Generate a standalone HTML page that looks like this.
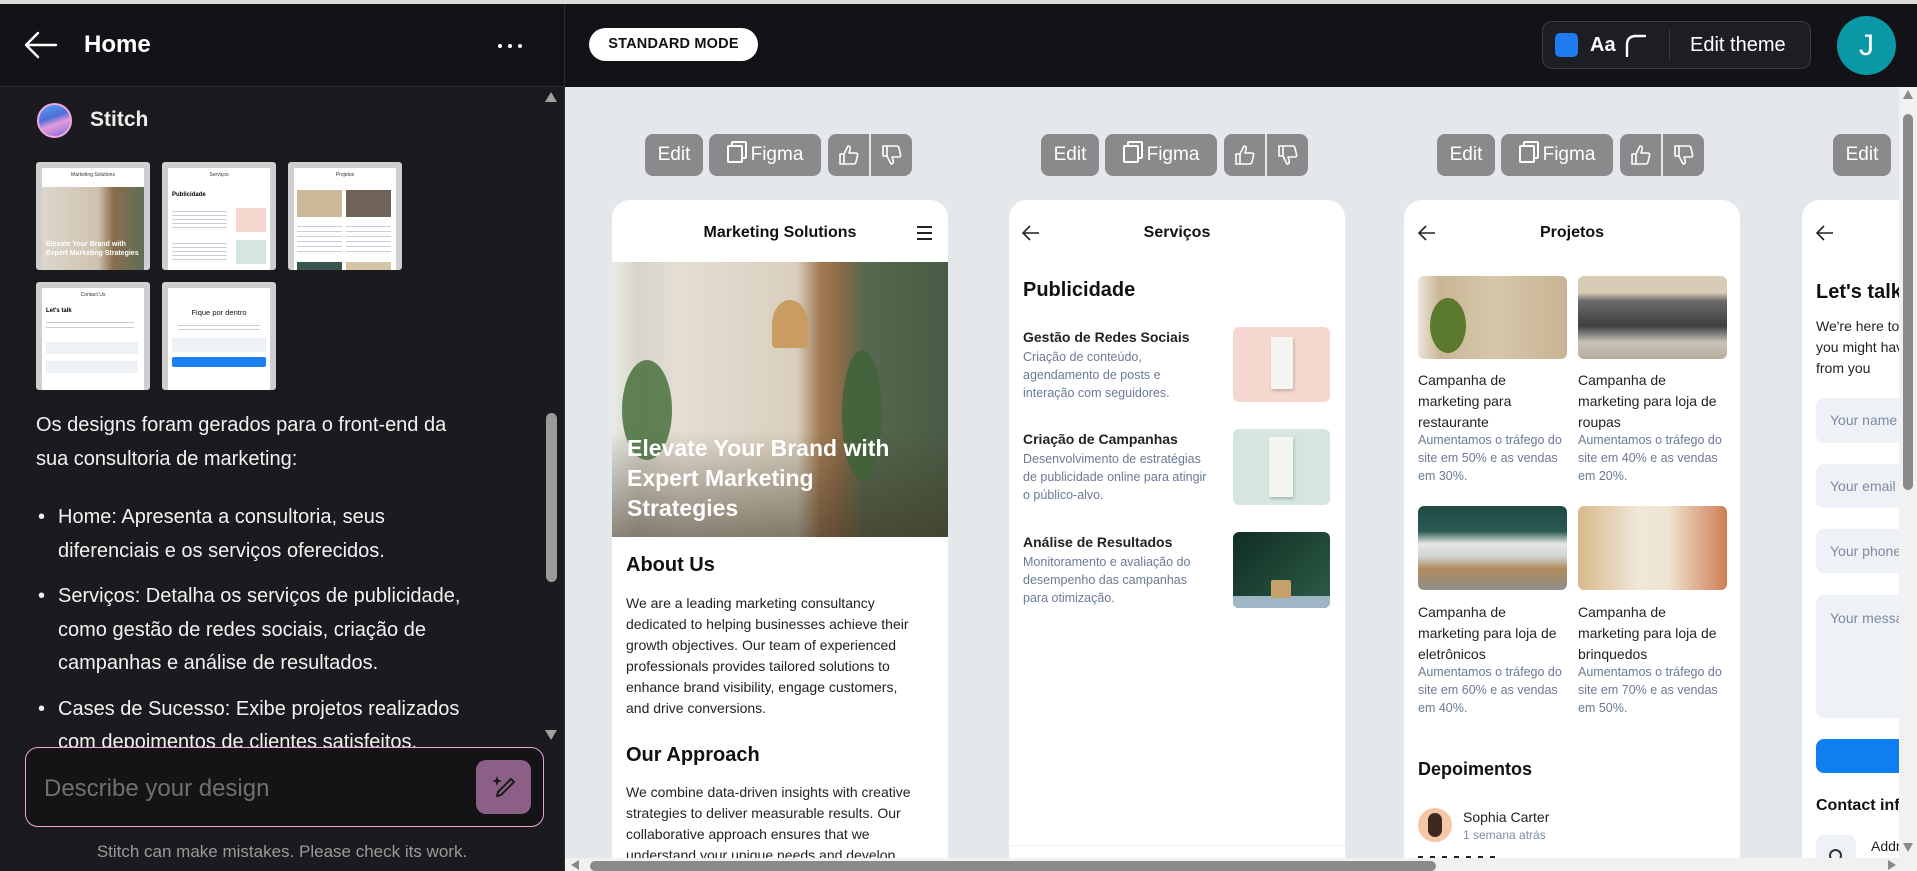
<!DOCTYPE html>
<html><head><meta charset="utf-8"><style>
*{margin:0;padding:0;box-sizing:border-box}
body{width:1917px;height:871px;overflow:hidden;background:#e5e8eb;font-family:"Liberation Sans",sans-serif;position:relative}
.a{position:absolute}
.t{position:absolute;white-space:nowrap}
.btn{position:absolute;top:134px;height:42px;background:#8a8a8c;border-radius:8px;color:#fff;font-size:19px;line-height:42px;text-align:center}
.btn svg{position:absolute;left:10px;top:10px}
.card{position:absolute;top:200px;width:336px;height:700px;background:#fff;border-radius:18px;overflow:hidden}
.ct{font-weight:bold;font-size:16px;color:#111}
.gr{color:#6a7a95;font-size:12.5px;line-height:18px}
.bk{font-size:14px;color:#222;line-height:21px}
.inp{position:absolute;left:14px;width:200px;background:#eef1f5;border-radius:8px;color:#7d8ca3;font-size:14px;padding-left:14px}
</style></head><body>
<div class="a" style="left:0;top:0;width:1917px;height:4px;background:#dcdcdc"></div>
<!-- SIDEBAR -->
<div class="a" style="left:0;top:4px;width:564px;height:867px;background:#1b1b1f"></div>
<div class="a" style="left:0;top:4px;width:564px;height:83px;background:#131217;border-bottom:1px solid #2c2c30"></div>
<svg class="a" style="left:24px;top:31px" width="34" height="28" viewBox="0 0 34 28"><path d="M14 2 L2 14 L14 26 M2 14 H32" stroke="#fff" stroke-width="2.4" fill="none" stroke-linecap="round" stroke-linejoin="round"/></svg>
<div class="t" style="left:84px;top:30px;font-size:24px;font-weight:bold;color:#fff;line-height:30px">Home</div>
<div class="a" style="left:498px;top:44px;width:4px;height:4px;border-radius:2px;background:#fff"></div>
<div class="a" style="left:508px;top:44px;width:4px;height:4px;border-radius:2px;background:#fff"></div>
<div class="a" style="left:518px;top:44px;width:4px;height:4px;border-radius:2px;background:#fff"></div>
<div class="a" style="left:37px;top:103px;width:35px;height:35px;border-radius:50%;background:linear-gradient(160deg,#5aa7f0 0%,#4c6fd8 40%,#e59bd8 60%,#7b6be0 100%);border:2px solid #f1a7e6"></div>
<div class="t" style="left:90px;top:107px;font-size:21px;font-weight:bold;color:#eee;line-height:26px">Stitch</div>
<!-- thumbnails -->
<div class="a" style="left:36px;top:162px;width:114px;height:108px;background:#cfcfcf;border-radius:3px;padding:6px 6px 0 6px"><div style="background:#fff;height:102px;position:relative;overflow:hidden"><div style="font-size:5px;text-align:center;padding-top:4px;color:#333">Marketing Solutions</div><div style="position:absolute;top:19px;left:0;right:0;bottom:0;background:linear-gradient(90deg,#dcd6cc,#cfc2ae 55%,#8a6e4e 70%,#5d6e57)"></div><div style="position:absolute;left:4px;top:72px;color:#fff;font-size:7px;font-weight:bold;line-height:9px">Elevate Your Brand with Expert Marketing Strategies</div></div></div>
<div class="a" style="left:162px;top:162px;width:114px;height:108px;background:#cfcfcf;border-radius:3px;padding:6px 6px 0 6px"><div style="background:#fff;height:102px;position:relative;overflow:hidden"><div style="font-size:5px;text-align:center;padding-top:4px;color:#333">Serviços</div><div style="position:absolute;left:4px;top:24px;font-size:6px;font-weight:bold">Publicidade</div><div style="position:absolute;right:4px;top:40px;width:30px;height:24px;background:#f6d7cf"></div><div style="position:absolute;right:4px;top:72px;width:30px;height:24px;background:#d5e5df"></div><div style="position:absolute;left:4px;top:40px;width:55px;height:20px;background:repeating-linear-gradient(#fff 0 3px,#c9cfd9 3px 4px)"></div><div style="position:absolute;left:4px;top:72px;width:55px;height:20px;background:repeating-linear-gradient(#fff 0 3px,#c9cfd9 3px 4px)"></div></div></div>
<div class="a" style="left:288px;top:162px;width:114px;height:108px;background:#cfcfcf;border-radius:3px;padding:6px 6px 0 6px"><div style="background:#fff;height:102px;position:relative;overflow:hidden"><div style="font-size:5px;text-align:center;padding-top:4px;color:#333">Projetos</div><div style="position:absolute;left:3px;top:22px;width:45px;height:27px;background:#cbb99a"></div><div style="position:absolute;left:52px;top:22px;width:45px;height:27px;background:#6f6256"></div><div style="position:absolute;left:3px;top:54px;width:45px;height:30px;background:repeating-linear-gradient(#fff 0 4px,#c9cfd9 4px 5px)"></div><div style="position:absolute;left:52px;top:54px;width:45px;height:30px;background:repeating-linear-gradient(#fff 0 4px,#c9cfd9 4px 5px)"></div><div style="position:absolute;left:3px;top:94px;width:45px;height:10px;background:#3b5651"></div><div style="position:absolute;left:52px;top:94px;width:45px;height:10px;background:#d6c4a6"></div></div></div>
<div class="a" style="left:36px;top:282px;width:114px;height:108px;background:#cfcfcf;border-radius:3px;padding:6px 6px 0 6px"><div style="background:#fff;height:102px;position:relative;overflow:hidden"><div style="font-size:5px;text-align:center;padding-top:4px;color:#333">Contact Us</div><div style="position:absolute;left:4px;top:20px;font-size:6px;font-weight:bold">Let's talk</div><div style="position:absolute;left:4px;top:30px;width:88px;height:14px;background:repeating-linear-gradient(#fff 0 4px,#ccc 4px 5px)"></div><div style="position:absolute;left:4px;top:54px;width:92px;height:12px;background:#eef1f5"></div><div style="position:absolute;left:4px;top:73px;width:92px;height:12px;background:#eef1f5"></div></div></div>
<div class="a" style="left:162px;top:282px;width:114px;height:108px;background:#cfcfcf;border-radius:3px;padding:6px 6px 0 6px"><div style="background:#fff;height:102px;position:relative;overflow:hidden"><div style="position:absolute;left:0;right:0;top:20px;font-size:7.5px;text-align:center;color:#111">Fique por dentro</div><div style="position:absolute;left:10px;top:34px;width:82px;height:8px;background:repeating-linear-gradient(#fff 0 3px,#ccc 3px 4px)"></div><div style="position:absolute;left:4px;top:50px;width:94px;height:14px;background:#eef1f5"></div><div style="position:absolute;left:4px;top:69px;width:94px;height:10px;background:#1a7ff0;border-radius:2px"></div></div></div>
<!-- sidebar text -->
<div class="a" style="left:36px;top:409px;width:470px;height:338px;overflow:hidden;color:#f2f2f2;font-size:20px;line-height:33.5px">
<div>Os designs foram gerados para o front-end da<br>sua consultoria de marketing:</div>
<div style="position:relative;margin-top:25px;padding-left:22px"><span style="position:absolute;left:2px">•</span>Home: Apresenta a consultoria, seus<br>diferenciais e os serviços oferecidos.</div>
<div style="position:relative;margin-top:12px;padding-left:22px"><span style="position:absolute;left:2px">•</span>Serviços: Detalha os serviços de publicidade,<br>como gestão de redes sociais, criação de<br>campanhas e análise de resultados.</div>
<div style="position:relative;margin-top:12px;padding-left:22px"><span style="position:absolute;left:2px">•</span>Cases de Sucesso: Exibe projetos realizados<br>com depoimentos de clientes satisfeitos.</div>
</div>
<div class="a" style="left:545px;top:92px;width:0;height:0;border-left:6px solid transparent;border-right:6px solid transparent;border-bottom:10px solid #a0a0a0"></div>
<div class="a" style="left:546px;top:413px;width:11px;height:169px;border-radius:6px;background:#9a9a9a"></div>
<div class="a" style="left:545px;top:730px;width:0;height:0;border-left:6px solid transparent;border-right:6px solid transparent;border-top:10px solid #a0a0a0"></div>
<!-- input -->
<div class="a" style="left:25px;top:747px;width:519px;height:80px;border:1.5px solid #e9a3d9;border-radius:13px;background:#141316"></div>
<div class="t" style="left:44px;top:774px;font-size:24px;color:#707070;line-height:30px">Describe your design</div>
<div class="a" style="left:476px;top:760px;width:55px;height:54px;background:#8c5f86;border-radius:10px"></div>
<svg class="a" style="left:489px;top:773px" width="30" height="28" viewBox="0 0 30 28"><path d="M8 3 L9.3 6.7 L13 8 L9.3 9.3 L8 13 L6.7 9.3 L3 8 L6.7 6.7 Z" fill="#1a1a1a"/><path d="M22 6 L25 9 L12 22 L8 23 L9 19 Z" fill="none" stroke="#1a1a1a" stroke-width="2" stroke-linejoin="round"/></svg>
<div class="t" style="left:0;width:564px;text-align:center;top:841px;font-size:17px;color:#9a9a9a;line-height:22px">Stitch can make mistakes. Please check its work.</div>
<div class="a" style="left:564px;top:4px;width:1px;height:867px;background:#2c2c30"></div>

<!-- TOP BAR RIGHT -->
<div class="a" style="left:565px;top:4px;width:1352px;height:83px;background:#131216"></div>
<div class="a" style="left:589px;top:28px;width:169px;height:33px;background:#fff;border-radius:17px;text-align:center;font-size:14.5px;font-weight:bold;line-height:33px;color:#111;letter-spacing:.2px">STANDARD MODE</div>
<div class="a" style="left:1542px;top:21px;width:269px;height:48px;background:#1c1e24;border:1.5px solid #3a3d45;border-radius:10px"></div>
<div class="a" style="left:1555px;top:33px;width:23px;height:24px;background:#1f7cf0;border-radius:5px"></div>
<div class="t" style="left:1590px;top:32px;font-size:20px;font-weight:bold;color:#fff;line-height:26px">Aa</div>
<svg class="a" style="left:1624px;top:33px" width="24" height="24" viewBox="0 0 24 24"><path d="M3 23 V12 Q3 3 12 3 H21" stroke="#fff" stroke-width="2.4" fill="none" stroke-linecap="round"/></svg>
<div class="a" style="left:1669px;top:30px;width:1px;height:30px;background:#3a3d45"></div>
<div class="t" style="left:1690px;top:32px;font-size:20px;color:#fff;line-height:26px">Edit theme</div>
<div class="a" style="left:1837px;top:16px;width:59px;height:59px;border-radius:50%;background:#0a97a6;color:#fff;font-size:30px;text-align:center;line-height:59px">J</div>

<!-- CANVAS -->
<div class="a" style="left:565px;top:87px;width:1334px;height:771px;overflow:hidden">
<div class="a" style="left:-565px;top:-87px;width:1917px;height:871px">

<div class="btn" style="left:645px;width:58px">Edit</div>
<div class="btn" style="left:709px;width:112px"><span style="display:inline-block;width:16px;height:18px;border:2px solid #fff;border-radius:2px;vertical-align:-3px;margin-right:8px;box-shadow:4px -4px 0 -2px #8a8a8c,4px -4px 0 0 #fff"></span>Figma</div>
<div class="btn" style="left:828px;width:41px;border-radius:8px 0 0 8px"><svg width="22" height="22" viewBox="0 0 22 22"><path d="M2 10 H6 V20 H2 Z M6 10 L10 2 Q13 2 12 6 L11 9 H18 Q20 9 19.5 11.5 L18 18 Q17.5 20 15.5 20 H6" fill="none" stroke="#fff" stroke-width="1.6" stroke-linejoin="round"/></svg></div>
<div class="btn" style="left:871px;width:41px;border-radius:0 8px 8px 0"><svg width="22" height="22" viewBox="0 0 22 22"><path d="M2 12 H6 V2 H2 Z M6 12 L10 20 Q13 20 12 16 L11 13 H18 Q20 13 19.5 10.5 L18 4 Q17.5 2 15.5 2 H6" fill="none" stroke="#fff" stroke-width="1.6" stroke-linejoin="round"/></svg></div>

<div class="btn" style="left:1041px;width:58px">Edit</div>
<div class="btn" style="left:1105px;width:112px"><span style="display:inline-block;width:16px;height:18px;border:2px solid #fff;border-radius:2px;vertical-align:-3px;margin-right:8px;box-shadow:4px -4px 0 -2px #8a8a8c,4px -4px 0 0 #fff"></span>Figma</div>
<div class="btn" style="left:1224px;width:41px;border-radius:8px 0 0 8px"><svg width="22" height="22" viewBox="0 0 22 22"><path d="M2 10 H6 V20 H2 Z M6 10 L10 2 Q13 2 12 6 L11 9 H18 Q20 9 19.5 11.5 L18 18 Q17.5 20 15.5 20 H6" fill="none" stroke="#fff" stroke-width="1.6" stroke-linejoin="round"/></svg></div>
<div class="btn" style="left:1267px;width:41px;border-radius:0 8px 8px 0"><svg width="22" height="22" viewBox="0 0 22 22"><path d="M2 12 H6 V2 H2 Z M6 12 L10 20 Q13 20 12 16 L11 13 H18 Q20 13 19.5 10.5 L18 4 Q17.5 2 15.5 2 H6" fill="none" stroke="#fff" stroke-width="1.6" stroke-linejoin="round"/></svg></div>

<div class="btn" style="left:1437px;width:58px">Edit</div>
<div class="btn" style="left:1501px;width:112px"><span style="display:inline-block;width:16px;height:18px;border:2px solid #fff;border-radius:2px;vertical-align:-3px;margin-right:8px;box-shadow:4px -4px 0 -2px #8a8a8c,4px -4px 0 0 #fff"></span>Figma</div>
<div class="btn" style="left:1620px;width:41px;border-radius:8px 0 0 8px"><svg width="22" height="22" viewBox="0 0 22 22"><path d="M2 10 H6 V20 H2 Z M6 10 L10 2 Q13 2 12 6 L11 9 H18 Q20 9 19.5 11.5 L18 18 Q17.5 20 15.5 20 H6" fill="none" stroke="#fff" stroke-width="1.6" stroke-linejoin="round"/></svg></div>
<div class="btn" style="left:1663px;width:41px;border-radius:0 8px 8px 0"><svg width="22" height="22" viewBox="0 0 22 22"><path d="M2 12 H6 V2 H2 Z M6 12 L10 20 Q13 20 12 16 L11 13 H18 Q20 13 19.5 10.5 L18 4 Q17.5 2 15.5 2 H6" fill="none" stroke="#fff" stroke-width="1.6" stroke-linejoin="round"/></svg></div>

<div class="btn" style="left:1833px;width:58px">Edit</div>

<!-- CARD 1 -->
<div class="card" style="left:612px">
<div class="t ct" style="left:0;width:336px;text-align:center;top:23px;line-height:20px">Marketing Solutions</div>
<div class="a" style="left:305px;top:26px;width:15px;height:2px;background:#222;box-shadow:0 6px 0 #222,0 12px 0 #222"></div>
<div class="a" style="left:0;top:62px;width:336px;height:275px;background:linear-gradient(90deg,#e9ebe6 0%,#d7d3c9 8%,#e4ded3 20%,#d9cfbf 55%,#a07a52 62%,#8b6a48 68%,#56684f 75%,#4a5c45 100%)"></div>
<div class="a" style="left:160px;top:100px;width:36px;height:48px;border-radius:50% 50% 10% 10%;background:#c99c61"></div>
<div class="a" style="left:0;top:230px;width:336px;height:107px;background:linear-gradient(180deg,rgba(0,0,0,0),rgba(60,50,35,.55))"></div>
<div class="a" style="left:10px;top:160px;width:50px;height:100px;border-radius:50%;background:#3e6a35;opacity:.8"></div>
<div class="a" style="left:230px;top:150px;width:40px;height:130px;border-radius:50%;background:#3f6338;opacity:.85"></div>
<div class="a" style="left:15px;top:233px;color:#fff;font-size:23px;font-weight:bold;line-height:30px">Elevate Your Brand with<br>Expert Marketing<br>Strategies</div>
<div class="t" style="left:14px;top:352px;font-size:20px;font-weight:bold;color:#111;line-height:26px">About Us</div>
<div class="a bk" style="left:14px;top:393px">We are a leading marketing consultancy<br>dedicated to helping businesses achieve their<br>growth objectives. Our team of experienced<br>professionals provides tailored solutions to<br>enhance brand visibility, engage customers,<br>and drive conversions.</div>
<div class="t" style="left:14px;top:542px;font-size:20px;font-weight:bold;color:#111;line-height:26px">Our Approach</div>
<div class="a bk" style="left:14px;top:582px">We combine data-driven insights with creative<br>strategies to deliver measurable results. Our<br>collaborative approach ensures that we<br>understand your unique needs and develop</div>
</div>

<!-- CARD 2 -->
<div class="card" style="left:1009px">
<svg class="a" style="left:13px;top:25px" width="18" height="16" viewBox="0 0 18 16"><path d="M8 1 L1 8 L8 15 M1 8 H17" stroke="#222" stroke-width="1.6" fill="none"/></svg>
<div class="t ct" style="left:0;width:336px;text-align:center;top:23px;line-height:20px">Serviços</div>
<div class="t" style="left:14px;top:77px;font-size:20px;font-weight:bold;color:#111;line-height:26px">Publicidade</div>
<div class="t" style="left:14px;top:128px;font-size:14px;font-weight:bold;color:#222;line-height:18px">Gestão de Redes Sociais</div>
<div class="a gr" style="left:14px;top:148px">Criação de conteúdo,<br>agendamento de posts e<br>interação com seguidores.</div>
<div class="a" style="left:224px;top:127px;width:97px;height:75px;background:#f6d7cf;border-radius:6px"><div style="position:absolute;left:38px;top:10px;width:22px;height:52px;background:#f5f5f2;box-shadow:1px 2px 3px rgba(0,0,0,.2)"></div></div>
<div class="t" style="left:14px;top:230px;font-size:14px;font-weight:bold;color:#222;line-height:18px">Criação de Campanhas</div>
<div class="a gr" style="left:14px;top:250px">Desenvolvimento de estratégias<br>de publicidade online para atingir<br>o público-alvo.</div>
<div class="a" style="left:224px;top:229px;width:97px;height:76px;background:#d5e5df;border-radius:6px"><div style="position:absolute;left:36px;top:8px;width:24px;height:60px;background:#f5f5f2;box-shadow:1px 2px 3px rgba(0,0,0,.2)"></div></div>
<div class="t" style="left:14px;top:333px;font-size:14px;font-weight:bold;color:#222;line-height:18px">Análise de Resultados</div>
<div class="a gr" style="left:14px;top:353px">Monitoramento e avaliação do<br>desempenho das campanhas<br>para otimização.</div>
<div class="a" style="left:224px;top:332px;width:97px;height:76px;background:linear-gradient(135deg,#0f2e22,#2e5c48);border-radius:6px;overflow:hidden"><div style="position:absolute;left:0;right:0;bottom:0;height:12px;background:#9fb6c6"></div><div style="position:absolute;left:38px;top:48px;width:20px;height:18px;background:#c79f6a;border-radius:2px"></div></div>
<div class="a" style="left:0;top:645px;width:336px;height:1px;background:#eceef1"></div>
</div>

<!-- CARD 3 -->
<div class="card" style="left:1404px">
<svg class="a" style="left:14px;top:25px" width="18" height="16" viewBox="0 0 18 16"><path d="M8 1 L1 8 L8 15 M1 8 H17" stroke="#222" stroke-width="1.6" fill="none"/></svg>
<div class="t ct" style="left:0;width:336px;text-align:center;top:23px;line-height:20px">Projetos</div>
<div class="a" style="left:14px;top:76px;width:149px;height:83px;border-radius:6px;background:linear-gradient(90deg,#ece6da 0%,#c9b595 15%,#d6c7aa 50%,#c8b493 100%)"><div style="position:absolute;left:12px;top:22px;width:36px;height:55px;border-radius:50%;background:#5b7a2e"></div></div>
<div class="a" style="left:174px;top:76px;width:149px;height:83px;border-radius:6px;background:linear-gradient(180deg,#d8cbb6 0%,#d8cbb6 20%,#6c6b6a 30%,#3d3f41 60%,#c9c3bb 80%,#b7ab9b 100%)"></div>
<div class="a bk" style="left:14px;top:170px">Campanha de<br>marketing para<br>restaurante</div>
<div class="a bk" style="left:174px;top:170px">Campanha de<br>marketing para loja de<br>roupas</div>
<div class="a gr" style="left:14px;top:231px">Aumentamos o tráfego do<br>site em 50% e as vendas<br>em 30%.</div>
<div class="a gr" style="left:174px;top:231px">Aumentamos o tráfego do<br>site em 40% e as vendas<br>em 20%.</div>
<div class="a" style="left:14px;top:306px;width:149px;height:84px;border-radius:6px;background:linear-gradient(180deg,#1f4a44 0%,#2a5a52 30%,#e7e8e4 45%,#cfd3d2 60%,#b08a5c 75%,#8f8f8c 100%)"></div>
<div class="a" style="left:174px;top:306px;width:149px;height:84px;border-radius:6px;background:linear-gradient(90deg,#d8b98a,#efe7d8 40%,#efe4d2 60%,#cf7d55)"></div>
<div class="a bk" style="left:14px;top:402px">Campanha de<br>marketing para loja de<br>eletrônicos</div>
<div class="a bk" style="left:174px;top:402px">Campanha de<br>marketing para loja de<br>brinquedos</div>
<div class="a gr" style="left:14px;top:463px">Aumentamos o tráfego do<br>site em 60% e as vendas<br>em 40%.</div>
<div class="a gr" style="left:174px;top:463px">Aumentamos o tráfego do<br>site em 70% e as vendas<br>em 50%.</div>
<div class="t" style="left:14px;top:557px;font-size:18px;font-weight:bold;color:#111;line-height:24px">Depoimentos</div>
<div class="a" style="left:14px;top:608px;width:34px;height:34px;border-radius:50%;background:#f6c7a6;overflow:hidden"><div style="position:absolute;left:10px;top:5px;width:14px;height:24px;border-radius:7px;background:#3c2a22"></div></div>
<div class="t" style="left:59px;top:608px;font-size:14px;color:#222;line-height:18px">Sophia Carter</div>
<div class="t" style="left:59px;top:627px;font-size:12px;color:#7d8ca3;line-height:16px">1 semana atrás</div>
<div class="a" style="left:14px;top:656px;width:80px;height:6px;background:repeating-linear-gradient(90deg,#222 0 5px,transparent 5px 12px)"></div>
</div>

<!-- CARD 4 -->
<div class="card" style="left:1802px">
<svg class="a" style="left:14px;top:25px" width="18" height="16" viewBox="0 0 18 16"><path d="M8 1 L1 8 L8 15 M1 8 H17" stroke="#222" stroke-width="1.6" fill="none"/></svg>
<div class="t" style="left:14px;top:79px;font-size:20px;font-weight:bold;color:#111;line-height:26px">Let's talk</div>
<div class="a bk" style="left:14px;top:116px;white-space:nowrap">We're here to help and answer any questions<br>you might have. We look forward to hearing<br>from you</div>
<div class="inp" style="top:198px;height:45px;line-height:45px">Your name</div>
<div class="inp" style="top:264px;height:44px;line-height:44px">Your email</div>
<div class="inp" style="top:329px;height:44px;line-height:44px">Your phone</div>
<div class="inp" style="top:395px;height:123px;line-height:18px;padding-top:14px">Your message</div>
<div class="a" style="left:14px;top:539px;width:200px;height:34px;background:#0e7ff0;border-radius:8px"></div>
<div class="t" style="left:14px;top:596px;font-size:16px;font-weight:bold;color:#111;line-height:20px">Contact info</div>
<div class="a" style="left:14px;top:635px;width:40px;height:40px;background:#eef1f5;border-radius:8px"></div>
<div class="a" style="left:27px;top:649px;width:13px;height:13px;border:2px solid #333;border-radius:50%"></div>
<div class="t" style="left:69px;top:637px;font-size:14px;color:#222;line-height:18px">Address</div>
</div>
</div>
</div>

<div class="a" style="left:1899px;top:87px;width:18px;height:771px;background:#f1f1f1"></div>
<div class="a" style="left:1903px;top:90px;width:0;height:0;border-left:5px solid transparent;border-right:5px solid transparent;border-bottom:9px solid #8a8a8a"></div>
<div class="a" style="left:1903px;top:114px;width:10px;height:376px;border-radius:5px;background:#8a8a8a"></div>
<div class="a" style="left:1903px;top:843px;width:0;height:0;border-left:5px solid transparent;border-right:5px solid transparent;border-top:9px solid #8a8a8a"></div>
<div class="a" style="left:565px;top:858px;width:1352px;height:13px;background:#f1f1f1"></div>
<div class="a" style="left:571px;top:860px;width:0;height:0;border-top:5px solid transparent;border-bottom:5px solid transparent;border-right:8px solid #8a8a8a"></div>
<div class="a" style="left:590px;top:861px;width:846px;height:10px;border-radius:5px;background:#8a8a8a"></div>
<div class="a" style="left:1888px;top:860px;width:0;height:0;border-top:5px solid transparent;border-bottom:5px solid transparent;border-left:8px solid #8a8a8a"></div>
</body></html>
